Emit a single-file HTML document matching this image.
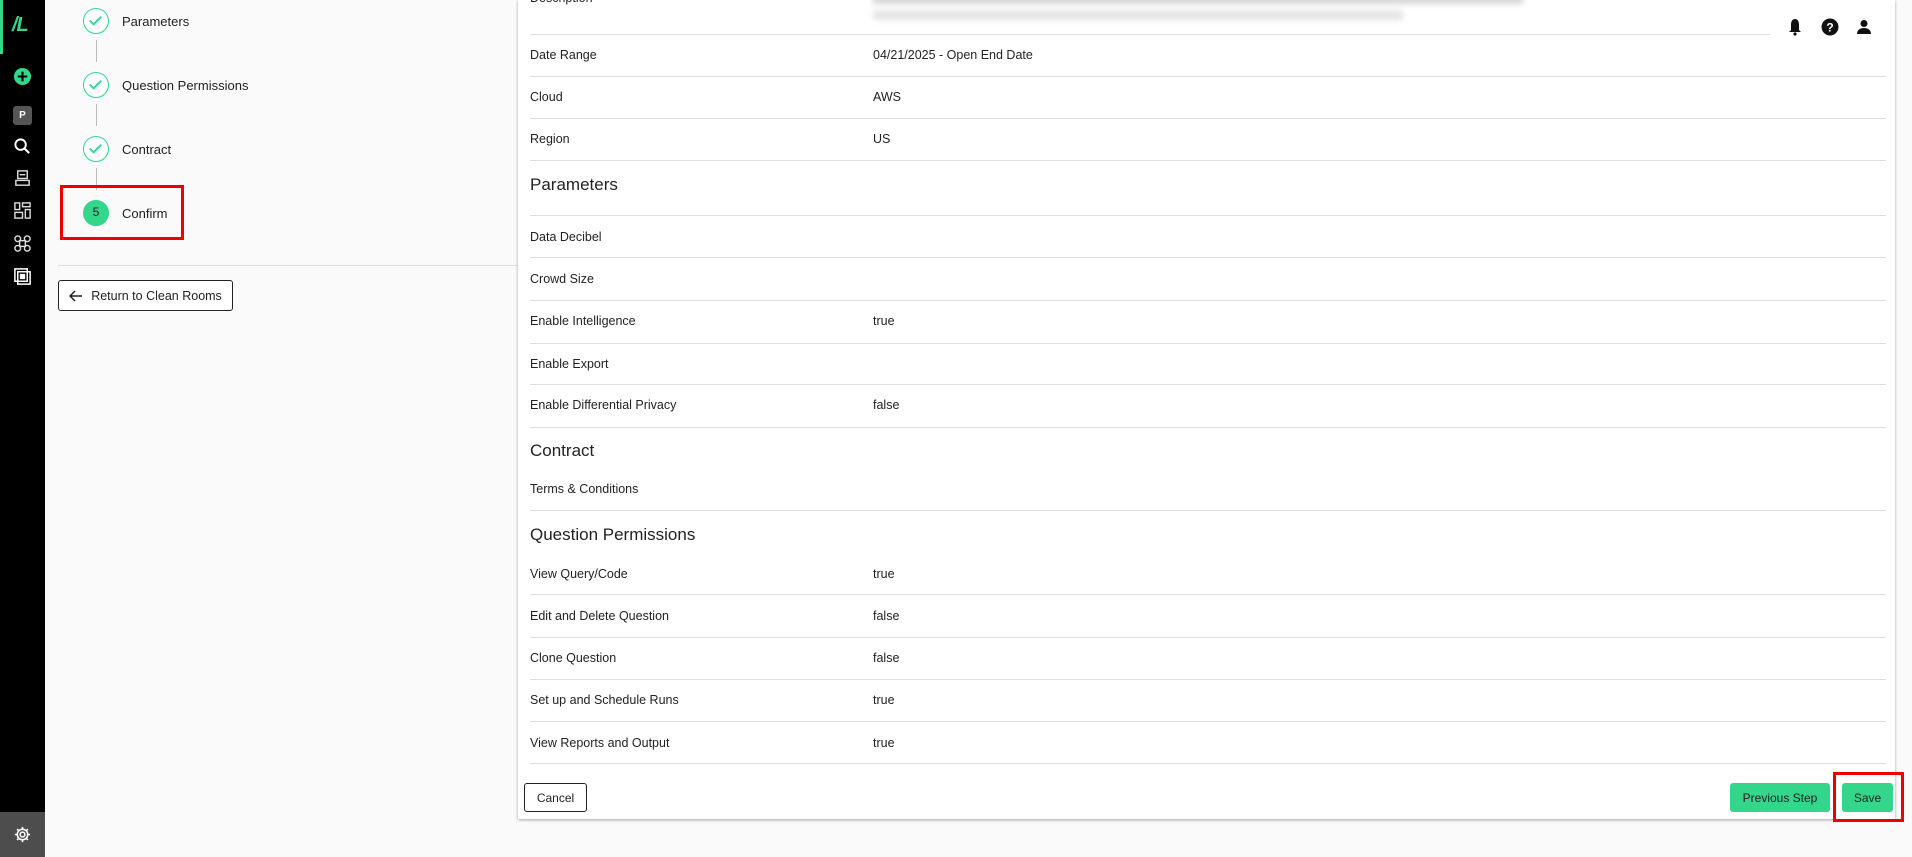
<!DOCTYPE html>
<html><head><meta charset="utf-8"><style>
*{margin:0;padding:0;box-sizing:border-box}
body{width:1912px;height:857px;overflow:hidden;background:#fafafa;font-family:"Liberation Sans",sans-serif;color:#222;position:relative}
.a{position:absolute}
.sb{left:0;top:0;width:45px;height:857px;background:#000}
.ic{position:absolute;left:13px;width:19px;height:19px}
.step{position:absolute;left:83px;width:26px;height:26px;border-radius:50%;border:1.5px solid #33d68a;background:#fff}
.lbl{position:absolute;left:122px;font-size:13px;color:#222}
.vl{position:absolute;left:96px;width:1px;background:#bbb}
.card{left:518px;top:0;width:1377px;height:819px;background:#fff;box-shadow:0 1px 3px rgba(0,0,0,.35)}
.hr{position:absolute;left:12px;right:9px;height:1px;background:#ddd}
.k,.v{position:absolute;font-size:12.5px;transform:translateY(-50%)}
.k{left:12px}.v{left:355px}
.h{position:absolute;left:12px;font-size:17px;transform:translateY(-50%);color:#222}
.btn{position:absolute;font-size:12px;display:flex;align-items:center;justify-content:center;border-radius:3px}
</style></head><body>
<div class="a sb">
  <div class="a" style="left:0;top:0;width:3px;height:54px;background:#33d68a"></div>
  <div class="a" style="left:12px;top:14px;font-size:20px;font-weight:bold;color:#33d68a;font-style:italic;letter-spacing:-1px">/L</div>
  <svg class="ic" style="top:67px" viewBox="0 0 20 20"><circle cx="10" cy="10" r="9" fill="#33d68a"/><path d="M10 5v10M5 10h10" stroke="#000" stroke-width="2.2"/></svg>
  <div class="a" style="left:13px;top:106px;width:19px;height:19px;background:#555;border-radius:3px;color:#fff;font-size:10px;font-weight:bold;text-align:center;line-height:19px">P</div>
  <svg class="ic" style="top:137px" viewBox="0 0 20 20"><circle cx="8" cy="8" r="5.5" fill="none" stroke="#fff" stroke-width="2"/><path d="M12 12l5 5" stroke="#fff" stroke-width="2.2"/></svg>
  <svg class="ic" style="top:169px" viewBox="0 0 20 20" fill="none" stroke="#ddd" stroke-width="1.5"><rect x="5" y="2" width="10" height="8"/><path d="M3 12h14v5H3zM7 6h6"/></svg>
  <svg class="ic" style="top:201px" viewBox="0 0 20 20" fill="none" stroke="#ddd" stroke-width="1.5"><rect x="2" y="2" width="5" height="7"/><rect x="10" y="2" width="8" height="4"/><rect x="2" y="12" width="8" height="6"/><rect x="13" y="9" width="5" height="9"/></svg>
  <svg class="ic" style="top:234px" viewBox="0 0 20 20" fill="none" stroke="#ddd" stroke-width="1.5"><circle cx="5" cy="5" r="3"/><circle cx="15" cy="5" r="3"/><circle cx="5" cy="15" r="3"/><circle cx="15" cy="15" r="3"/><rect x="7" y="7" width="6" height="6"/></svg>
  <svg class="ic" style="top:267px" viewBox="0 0 20 20" fill="none" stroke="#fff" stroke-width="1.6"><rect x="2" y="2" width="13" height="13"/><rect x="5" y="5" width="13" height="13"/><rect x="8" y="8" width="4" height="4" fill="#fff"/></svg>
  <div class="a" style="left:0;top:812px;width:45px;height:45px;background:#4d4d4d"></div>
  <svg class="ic" style="top:825px" viewBox="0 0 20 20" fill="none" stroke="#fff" stroke-width="1.6"><circle cx="10" cy="10" r="2.5"/><path d="M10 2v3M10 15v3M2 10h3M15 10h3M4.3 4.3l2.1 2.1M13.6 13.6l2.1 2.1M4.3 15.7l2.1-2.1M13.6 6.4l2.1-2.1"/><circle cx="10" cy="10" r="5.5"/></svg>
</div>

<div class="step" style="top:8px"><svg width="23" height="23" viewBox="0 0 24 24"><path d="M6 12l4 4 8-8" fill="none" stroke="#33d68a" stroke-width="2"/></svg></div>
<div class="lbl" style="top:14px">Parameters</div>
<div class="vl" style="top:40px;height:22px"></div>
<div class="step" style="top:72px"><svg width="23" height="23" viewBox="0 0 24 24"><path d="M6 12l4 4 8-8" fill="none" stroke="#33d68a" stroke-width="2"/></svg></div>
<div class="lbl" style="top:78px">Question Permissions</div>
<div class="vl" style="top:104px;height:22px"></div>
<div class="step" style="top:136px"><svg width="23" height="23" viewBox="0 0 24 24"><path d="M6 12l4 4 8-8" fill="none" stroke="#33d68a" stroke-width="2"/></svg></div>
<div class="lbl" style="top:142px">Contract</div>
<div class="vl" style="top:168px;height:22px"></div>
<div class="step" style="top:200px;background:#33d68a;text-align:center;font-size:12px;line-height:23px">5</div>
<div class="lbl" style="top:206px">Confirm</div>
<div class="a" style="left:60px;top:185px;width:124px;height:55px;border:3.5px solid #e00"></div>
<div class="a" style="left:58px;top:265px;width:460px;height:1px;background:#ddd"></div>
<div class="btn" style="left:58px;top:280px;width:175px;height:31px;border:1px solid #222;background:#fff;font-size:12.5px">
<svg width="14" height="12" viewBox="0 0 14 12" style="margin-right:8px"><path d="M13 6H2M6 1L1 6l5 5" fill="none" stroke="#222" stroke-width="1.5"/></svg>Return to Clean Rooms</div>

<div class="a card">
  <div class="a" style="left:355px;top:-6px;width:650px;height:10px;background:#bbb;filter:blur(3px);opacity:.6"></div>
  <div class="a" style="left:355px;top:10px;width:530px;height:10px;background:#ccc;filter:blur(3px);opacity:.5"></div>
  <div class="k" style="top:-2px">Description</div>
  <div class="hr" style="top:34px;right:125px"></div>
  <svg class="a" style="left:1270px;top:18px" width="14" height="18" viewBox="0 0 14 18"><path d="M7 1C4 1 3 4 3 7v5l-2 2h12l-2-2V7c0-3-1-6-4-6z" fill="#111"/><circle cx="7" cy="16" r="1.6" fill="#111"/></svg>
  <svg class="a" style="left:1303px;top:18px" width="18" height="18" viewBox="0 0 18 18"><circle cx="9" cy="9" r="8.5" fill="#111"/><text x="9" y="13.5" font-size="12" font-weight="bold" fill="#fff" text-anchor="middle" font-family="Liberation Sans">?</text></svg>
  <svg class="a" style="left:1339px;top:19px" width="14" height="16" viewBox="0 0 14 16"><circle cx="7" cy="4.5" r="3.5" fill="#111"/><path d="M0 15c0-4 3-6 7-6s7 2 7 6z" fill="#111"/></svg>

  <div class="k" style="top:55px">Date Range</div><div class="v" style="top:55px">04/21/2025 - Open End Date</div>
  <div class="hr" style="top:76px"></div>
  <div class="k" style="top:97px">Cloud</div><div class="v" style="top:97px">AWS</div>
  <div class="hr" style="top:118px"></div>
  <div class="k" style="top:139px">Region</div><div class="v" style="top:139px">US</div>
  <div class="hr" style="top:160px"></div>
  <div class="h" style="top:185px">Parameters</div>
  <div class="hr" style="top:215px"></div>
  <div class="k" style="top:237px">Data Decibel</div>
  <div class="hr" style="top:257px"></div>
  <div class="k" style="top:279px">Crowd Size</div>
  <div class="hr" style="top:300px"></div>
  <div class="k" style="top:321px">Enable Intelligence</div><div class="v" style="top:321px">true</div>
  <div class="hr" style="top:343px"></div>
  <div class="k" style="top:364px">Enable Export</div>
  <div class="hr" style="top:384px"></div>
  <div class="k" style="top:405px">Enable Differential Privacy</div><div class="v" style="top:405px">false</div>
  <div class="hr" style="top:427px"></div>
  <div class="h" style="top:451px">Contract</div>
  <div class="k" style="top:489px">Terms &amp; Conditions</div>
  <div class="hr" style="top:510px"></div>
  <div class="h" style="top:535px">Question Permissions</div>
  <div class="k" style="top:574px">View Query/Code</div><div class="v" style="top:574px">true</div>
  <div class="hr" style="top:594px"></div>
  <div class="k" style="top:616px">Edit and Delete Question</div><div class="v" style="top:616px">false</div>
  <div class="hr" style="top:637px"></div>
  <div class="k" style="top:658px">Clone Question</div><div class="v" style="top:658px">false</div>
  <div class="hr" style="top:679px"></div>
  <div class="k" style="top:700px">Set up and Schedule Runs</div><div class="v" style="top:700px">true</div>
  <div class="hr" style="top:721px"></div>
  <div class="k" style="top:743px">View Reports and Output</div><div class="v" style="top:743px">true</div>
  <div class="hr" style="top:763px"></div>
  <div class="btn" style="left:6px;top:783px;width:63px;height:29px;border:1px solid #222">Cancel</div>
  <div class="btn" style="left:1212px;top:783px;width:100px;height:29px;background:#33d68a">Previous Step</div>
  <div class="btn" style="left:1324px;top:783px;width:51px;height:29px;background:#33d68a">Save</div>
</div>
<div class="a" style="left:1833px;top:772px;width:71px;height:50px;border:3.5px solid #e00"></div>
</body></html>
